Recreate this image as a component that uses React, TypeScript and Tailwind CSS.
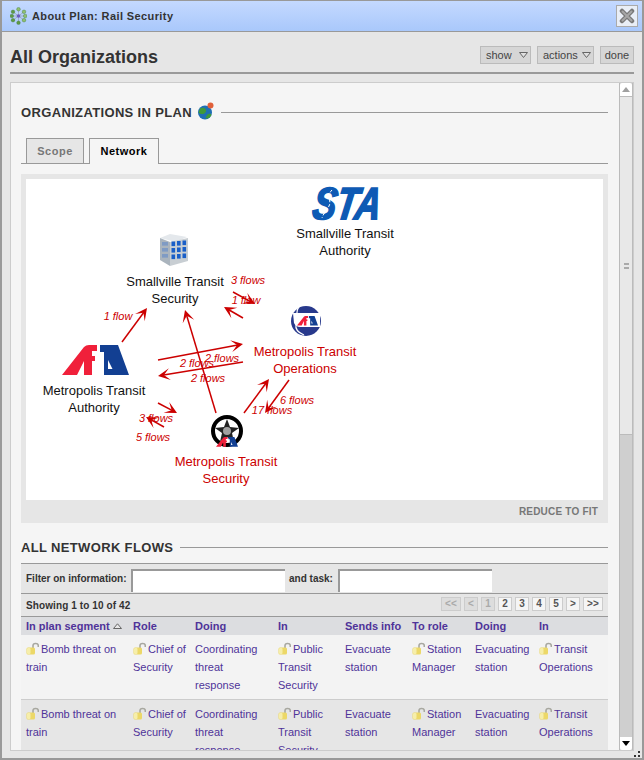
import React from "react";

const RED = "#cc0000";

function Mta({ x, y, w }: { x: number; y: number; w: number }) {
  const s = w / 67;
  return (
    <g transform={`translate(${x} ${y}) scale(${s})`}>
      <path d="M0 30 L22 2 Q24 0 27 0 L35 0 L35 6 L30 6 L30 11 L33 11 L33 16 L30 16 L30 30 L22 30 L22 16 L15 30 Z" fill="#f0203a" />
      <path d="M38 0 L56 0 L67 30 L42 30 L42 7 L38 7 Z" fill="#123f92" />
      <path d="M46 15 L46 24 L50.5 24 Z" fill="#ffffff" />
    </g>
  );
}

const arrows: [number, number, number, number][] = [
  [122, 342, 147, 308],
  [216, 413, 185, 310],
  [158, 360, 243, 344],
  [243, 362, 158, 376],
  [158, 403, 177, 413],
  [164, 427, 146, 417],
  [244, 413, 269, 379],
  [289, 380, 265, 413],
  [233, 292, 255, 304],
  [243, 318, 224, 307],
];

function Arrow({ a }: { a: [number, number, number, number] }) {
  const [x1, y1, x2, y2] = a;
  const len = Math.hypot(x2 - x1, y2 - y1);
  const dx = (x2 - x1) / len;
  const dy = (y2 - y1) / len;
  const px = -dy;
  const py = dx;
  const pts = [
    [x2, y2],
    [x2 - 12 * dx + 6 * px, y2 - 12 * dy + 6 * py],
    [x2 - 6 * dx, y2 - 6 * dy],
    [x2 - 12 * dx - 6 * px, y2 - 12 * dy - 6 * py],
  ]
    .map((p) => p.join(","))
    .join(" ");
  return (
    <g>
      <line x1={x1} y1={y1} x2={x2 - 4 * dx} y2={y2 - 4 * dy} stroke={RED} strokeWidth={1.5} />
      <polygon points={pts} fill={RED} />
    </g>
  );
}

const flowLabels: [string, number, number][] = [
  ["1 flow", 118, 316],
  ["3 flows", 248, 280],
  ["1 flow", 246, 300],
  ["2 flows", 222, 358],
  ["2 flows", 197, 363],
  ["2 flows", 208, 378],
  ["3 flows", 156, 418],
  ["5 flows", 153, 437],
  ["17 flows", 272, 410],
  ["6 flows", 297, 400],
];

const nodes: [string, string, number, number, boolean][] = [
  ["Smallville Transit", "Authority", 345, 233, false],
  ["Smallville Transit", "Security", 175, 281, false],
  ["Metropolis Transit", "Operations", 305, 351, true],
  ["Metropolis Transit", "Authority", 94, 390, false],
  ["Metropolis Transit", "Security", 226, 461, true],
];

function Graph() {
  return (
    <div className="relative h-[321px] bg-white overflow-hidden">
      <svg className="absolute left-0 top-0" width={577} height={321} viewBox="26 179 577 321">
        {/* STA */}
        <text
          transform="translate(311 219) skewX(-9)"
          fontFamily="'Liberation Sans', sans-serif"
          fontWeight={700}
          fontStyle="italic"
          fontSize={45}
          textLength={68}
          lengthAdjust="spacingAndGlyphs"
          fill="#0e5ab4"
          stroke="#0e5ab4"
          strokeWidth={1.8}
        >
          STA
        </text>
        <path d="M332 190 C326 196 332 201 329 206 C327 210 323 214 322 218" fill="none" stroke="#ffffff" strokeWidth={1} strokeDasharray="3 2" />
        {/* Building */}
        <polygon points="160,238 170,234 187,237 176,242" fill="#e4e8ec" />
        <polygon points="160,238 170,242 170,266 160,260" fill="#aab4bd" />
        <polygon points="170,242 188,238 188,261 170,266" fill="#c8ced3" />
        {[0, 1, 2].map((r) =>
          [0, 1, 2].map((c) => (
            <rect key={`${r}-${c}`} x={171.5 + c * 5.5} y={241.5 + r * 6.5 - c * 0.5} width={3.6} height={4.6} fill="#1a5fc8" />
          )),
        )}
        {[0, 1, 2].map((r) => (
          <rect key={r} x={162} y={242 + r * 6} width={6} height={3.6} fill="#7f9bc4" />
        ))}
        {/* MTA */}
        <Mta x={62} y={345} w={67} />
        {/* MTO */}
        <circle cx={306} cy={321} r={15} fill="#28398c" />
        <path d="M293 313 H320 V327 H300 Q296 327 294 323 Z" fill="#ffffff" />
        <path d="M299 307 C294 312 300 318 296 324 C295 329 299 333 304 335" fill="none" stroke="#ffffff" strokeWidth={1.2} />
        <Mta x={297} y={316} w={21} />
        {/* MTS */}
        <circle cx={227} cy={431} r={14} fill="#ffffff" stroke="#000000" strokeWidth={4} />
        <polygon points="227,419 230,427 239,428 232,433 234,442 227,437 220,442 222,433 215,428 224,427" fill="#222222" />
        <circle cx={227} cy={431} r={4} fill="#a0a0a0" />
        <Mta x={216} y={437} w={22} />
        {arrows.map((a, i) => (
          <Arrow key={i} a={a} />
        ))}
      </svg>
      {nodes.map(([a, b, x, y, red], i) => (
        <div
          key={i}
          style={{ left: x - 26 - 70, top: y - 179 - 8 }}
          className={`absolute w-[140px] text-center text-[13px] leading-[17px] ${red ? "text-[#cc0000]" : "text-[#111111]"}`}
        >
          {a}
          <br />
          {b}
        </div>
      ))}
      {flowLabels.map(([t, x, y], i) => (
        <div
          key={i}
          style={{ left: x - 26 - 30, top: y - 179 - 7 }}
          className="absolute w-[60px] text-center text-[11px] leading-[14px] italic text-[#cc0000]"
        >
          {t}
        </div>
      ))}
    </div>
  );
}

function Caret() {
  return (
    <svg width="9" height="6" viewBox="0 0 9 6" className="shrink-0">
      <path d="M0.5 0.5 H8.5 L4.5 5.5 Z" fill="#e0e0e0" stroke="#666666" strokeWidth="1" />
    </svg>
  );
}

function Lock() {
  return (
    <svg width="13" height="13" viewBox="0 0 13 13" className="inline-block align-[-2px] mr-[2px]">
      <path d="M7 6 V3.5 C7 1 12 0.5 12.3 3.5 V5" fill="none" stroke="#a8a8a0" strokeWidth="1.6" />
      <rect x="0.5" y="5.5" width="8.5" height="7" rx="1.5" fill="#ecd868" />
      <rect x="1" y="6" width="3.5" height="6" rx="1" fill="#f6eeaa" />
    </svg>
  );
}

function SectionTitle({ text, icon }: { text: string; icon?: React.ReactNode }) {
  return (
    <div className="flex items-center h-[18px]">
      <span className="pt-[2px] text-[13px] font-bold tracking-[0.35px] text-[#333333] whitespace-nowrap">{text}</span>
      {icon}
      <div className="flex-1 h-px bg-[#999999] ml-[7px]" />
    </div>
  );
}

const cols = "grid grid-cols-[107px_62px_83px_67px_67px_63px_64px_74px]";
const headers = ["In plan segment", "Role", "Doing", "In", "Sends info", "To role", "Doing", "In"];
const cells: [string, boolean, string][] = [
  ["Bomb threat on train", true, ""],
  ["Chief of Security", true, ""],
  ["Coordinating threat response", false, "pr-[15px]"],
  ["Public Transit Security", true, ""],
  ["Evacuate station", false, ""],
  ["Station Manager", true, ""],
  ["Evacuating station", false, ""],
  ["Transit Operations", true, ""],
];

function Row({ className }: { className: string }) {
  return (
    <div className={`${cols} py-[5px] text-[11px] leading-[18px] text-[#4f3399] ${className}`}>
      {cells.map(([t, lock, extra], i) => (
        <div key={i} className={`pl-[5px] ${extra}`}>
          {lock && <Lock />}
          {t}
        </div>
      ))}
    </div>
  );
}

function PageBtn({ t, off, w }: { t: string; off?: boolean; w?: string }) {
  return (
    <div
      className={`h-[14px] flex items-center justify-center border text-[10px] font-bold leading-none ${w ?? "w-[14px]"} ${
        off ? "bg-[#dddddd] border-[#cccccc] text-[#aaaaaa]" : "bg-[#f5f5f5] border-[#cccccc] text-[#555555]"
      }`}
    >
      {t}
    </div>
  );
}

export default function App() {
  return (
    <div className="w-[644px] h-[760px] flex flex-col overflow-hidden border-x-2 border-t border-b-2 border-[#999999] bg-[#e6e6e6] [font-family:'Liberation_Sans',Arial,sans-serif]">
      {/* Title bar */}
      <div className="h-[31px] shrink-0 flex items-center border-b border-[#999999] bg-gradient-to-b from-[#c4d9ff] to-[#a9c8fb] pl-[8px] pr-[4px]">
        <svg width="17" height="18" viewBox="0 0 17 18" className="shrink-0">
          {[[8.5, 2.2], [3, 4.8], [14, 4.8], [1.8, 9], [15.2, 9], [3, 13.2], [14, 13.2], [8.5, 15.8]].map(([x, y], i) => (
            <g key={i}>
              <line x1="8.5" y1="9" x2={x} y2={y} stroke="#9aa4b4" strokeWidth="0.8" />
              <circle cx={x} cy={y} r="1.8" fill={i % 2 ? "#5f9a45" : "#8fc06f"} stroke="#3f7a32" strokeWidth="0.4" />
            </g>
          ))}
          <circle cx="8.5" cy="9" r="1.8" fill="#6a5cc0" />
        </svg>
        <span className="ml-[5px] text-[11px] font-bold tracking-[0.4px] text-[#333333]">About Plan: Rail Security</span>
        <div className="ml-auto w-[22px] h-[22px] border border-[#aaaaaa] bg-[#e9eef6] flex items-center justify-center">
          <svg width="16" height="16" viewBox="0 0 16 16">
            <path d="M3 3 L13 13 M13 3 L3 13" stroke="#777777" strokeWidth="4.5" strokeLinecap="round" />
            <path d="M3.5 3.5 L12.5 12.5 M12.5 3.5 L3.5 12.5" stroke="#a6a6a6" strokeWidth="2" strokeLinecap="round" />
          </svg>
        </div>
      </div>

      {/* Header */}
      <div className="h-[42px] shrink-0 mx-[8px] flex items-start justify-between border-b-2 border-[#999999]">
        <h1 className="mt-[13px] text-[18px] leading-[24px] font-bold text-[#333333]">All Organizations</h1>
        <div className="mt-[14px] flex gap-[6px] text-[11px] text-[#444444]">
          <div className="w-[51px] h-[18px] flex items-center gap-[7px] pl-[5px] bg-[#d6d6d6] border border-[#bbbbbb]">
            show <Caret />
          </div>
          <div className="w-[57px] h-[18px] flex items-center gap-[4px] pl-[5px] bg-[#d6d6d6] border border-[#bbbbbb]">
            actions <Caret />
          </div>
          <div className="w-[34px] h-[18px] flex items-center justify-center pt-[1px] bg-[#d6d6d6] border border-[#bbbbbb]">done</div>
        </div>
      </div>

      {/* Panel */}
      <div className="relative mt-[8px] mx-[8px] h-[669px] shrink-0 overflow-hidden border border-[#cccccc] bg-[#f5f5f5] pl-[10px] pr-[25px] pt-[20px]">
        <SectionTitle
          text="ORGANIZATIONS IN PLAN"
          icon={
            <svg width="17" height="18" viewBox="0 0 17 18" className="ml-[5px] -mt-[2px] shrink-0">
              <circle cx="8" cy="10.5" r="7" fill="#1f6fb5" />
              <path d="M3 6.5 C6 4.5 10 6.5 9 9.5 C8 12.5 4 13 1.5 10.5 Z M10 13 C12 11 14 11.5 14.5 13 C13 16 10 17 8.5 16 Z" fill="#3f9a3a" />
              <circle cx="13.5" cy="3.5" r="3" fill="#e0603a" />
            </svg>
          }
        />

        {/* Tabs */}
        <div className="mt-[17px] h-[26px] flex items-start gap-[5px] pl-[5px] border-b border-[#999999]">
          <div className="w-[58px] h-[25px] flex items-center justify-center border border-b-0 border-[#999999] bg-[#e6e6e6] text-[11px] font-bold tracking-[0.5px] text-[#777777]">
            Scope
          </div>
          <div className="relative w-[70px] h-[26px] flex items-center justify-center border border-b-0 border-[#999999] bg-[#f5f5f5] text-[11px] font-bold tracking-[0.5px] text-[#000000]">
            Network
          </div>
        </div>

        {/* Graph */}
        <div className="mt-[10px] h-[349px] bg-[#e6e6e6] p-[5px]">
          <Graph />
          <div className="h-[23px] flex items-center justify-end pr-[5px] text-[10px] font-bold tracking-[0.2px] text-[#777777]">REDUCE TO FIT</div>
        </div>

        <div className="mt-[15px]">
          <SectionTitle text="ALL NETWORK FLOWS" />
        </div>

        {/* Table */}
        <div className="mt-[7px] border-t border-[#999999] bg-[#e6e6e6]">
          <div className="h-[30px] flex items-center pl-[5px] border-b border-[#999999] text-[10px] font-bold text-[#333333]">
            <span className="w-[105px]">Filter on information:</span>
            <div className="mt-[4px] w-[154px] h-[23px] bg-white border-l-2 border-t-2 border-[#999999]" />
            <span className="ml-[4px] w-[49px]">and task:</span>
            <div className="mt-[4px] w-[154px] h-[23px] bg-white border-l-2 border-t-2 border-[#999999]" />
          </div>
          <div className="h-[23px] flex items-center justify-between pl-[5px] pr-[5px] border-b border-[#999999] text-[10px] font-bold tracking-[0.1px] text-[#333333]">
            <span>Showing 1 to 10 of 42</span>
            <div className="flex gap-[3px] mb-[2px]">
              <PageBtn t="<<" off w="w-[20px]" />
              <PageBtn t="<" off />
              <PageBtn t="1" off />
              <PageBtn t="2" />
              <PageBtn t="3" />
              <PageBtn t="4" />
              <PageBtn t="5" />
              <PageBtn t=">" />
              <PageBtn t=">>" w="w-[20px]" />
            </div>
          </div>
          <div className={`${cols} h-[18px] items-center bg-[#dcdde0] text-[11px] font-bold text-[#4f3399]`}>
            {headers.map((h, i) => (
              <div key={i} className="pl-[5px] flex items-center gap-[3px] whitespace-nowrap">
                {h}
                {i === 0 && (
                  <svg width="9" height="6" viewBox="0 0 9 6">
                    <path d="M0.5 5.5 H8.5 L4.5 0.8 Z" fill="#e8e8e8" stroke="#666666" />
                  </svg>
                )}
              </div>
            ))}
          </div>
          <Row className="bg-[#f3f3f3] border-b border-[#cccccc]" />
          <Row className="bg-[#e6e6e6]" />
        </div>

        {/* Scrollbar */}
        <div className="absolute right-0 top-0 bottom-0 w-[14px] flex flex-col border-x border-[#bbbbbb] bg-[#cfcfcf]">
          <div className="h-[14px] shrink-0 flex items-center justify-center bg-white rounded-t-[2px] border-b border-[#bbbbbb]">
            <svg width="8" height="5" viewBox="0 0 8 5">
              <path d="M0 5 L4 0 L8 5 Z" fill="#a0a0a0" />
            </svg>
          </div>
          <div className="h-[338px] shrink-0 flex items-center justify-center bg-[#e8e8e8] border-b border-[#bbbbbb]">
            <div className="w-[5px] h-[6px] border-y-2 border-[#aaaaaa]" />
          </div>
          <div className="flex-1" />
          <div className="h-[13px] shrink-0 flex items-center justify-center bg-white rounded-b-[2px]">
            <svg width="8" height="5" viewBox="0 0 8 5">
              <path d="M0 0 L8 0 L4 5 Z" fill="#000000" />
            </svg>
          </div>
        </div>
      </div>

      {/* Resize grip */}
      <div className="flex-1 flex items-end justify-end pr-[2px] pb-[1px]">
        <svg width="6" height="6" viewBox="0 0 6 6">
          <rect x="4" y="0" width="2" height="2" fill="#333333" />
          <rect x="0" y="4" width="2" height="2" fill="#333333" />
          <rect x="4" y="4" width="2" height="2" fill="#333333" />
        </svg>
      </div>
    </div>
  );
}
